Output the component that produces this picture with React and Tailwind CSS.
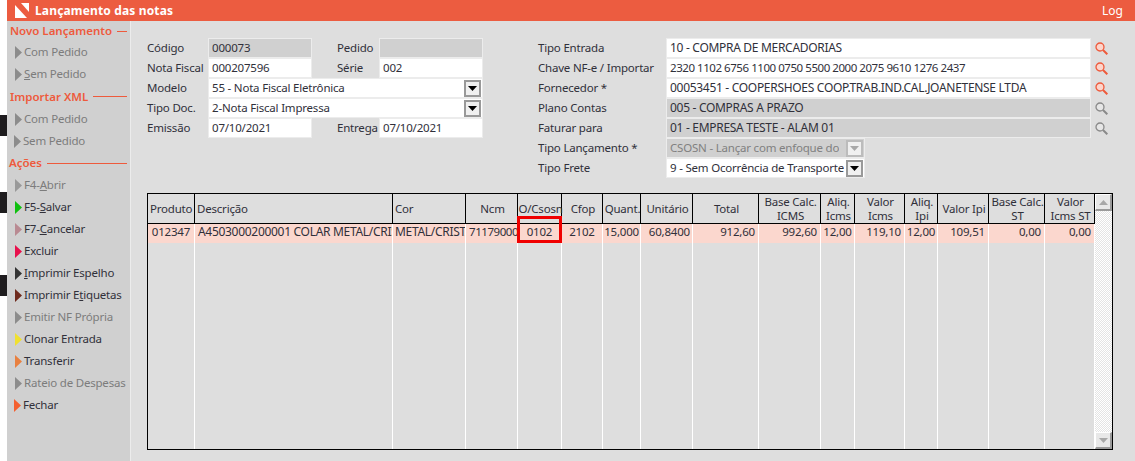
const font = "font-['Noto_Sans','Open_Sans',sans-serif]"

const menu = [
    { title: "Novo Lançamento", rowClass: "h-[20px] pl-[3px]" },
    { label: "Com Pedido", color: "#8c8c8c", muted: true },
    { label: <><u>S</u>em Pedido</>, color: "#8c8c8c", muted: true },
    { title: "Importar XML", rowClass: "h-[23px] pl-[3px]" },
    { label: "Com Pedido", color: "#8c8c8c", muted: true },
    { label: "Sem Pedido", color: "#8c8c8c", muted: true, shift: true },
    { title: "Ações", rowClass: "h-[22px] pl-[2px]" },
    { label: <>F4-<u>A</u>brir</>, color: "#999999", muted: true },
    { label: <>F5-<u>S</u>alvar</>, color: "#10c010" },
    { label: <>F7-<u>C</u>ancelar</>, color: "#b98a92" },
    { label: "Excluir", color: "#e8104c" },
    { label: <><u>I</u>mprimir Espelho</>, color: "#333333" },
    { label: <>Imprimir E<u>t</u>iquetas</>, color: "#6e2a1c" },
    { label: "Emitir NF Própria", color: "#8c8c8c", muted: true },
    { label: "Clonar Entrada", color: "#f0e030" },
    { label: "Transferir", color: "#e88040" },
    { label: "Rateio de Despesas", color: "#8c8c8c", muted: true },
    { label: "Fechar", color: "#f46030", shift: true },
]

const columns = [
    { name: "Produto", w: "w-[47px]", value: "012347", cell: "text-center" },
    { name: "Descrição", w: "w-[198px]", value: "A4503000200001 COLAR METAL/CRISTAL", cell: "pl-[3px] text-[12px] tracking-[-0.3px]" },
    { name: "Cor", w: "w-[73px]", value: "METAL/CRISTAL", cell: "pl-[2px] text-[12px] tracking-[-0.3px]" },
    { name: "Ncm", w: "w-[52px]", value: "71179000", cell: "pl-[3px] tracking-[-0.45px]", center: true },
    { name: "O/Csosn", w: "w-[44px]", value: "0102", cell: "text-center", center: true },
    { name: "Cfop", w: "w-[41px]", value: "2102", cell: "text-center", center: true },
    { name: "Quant.", w: "w-[38px]", value: "15,000", cell: "text-right pr-[1px]", center: true },
    { name: "Unitário", w: "w-[52px]", value: "60,8400", cell: "text-right pr-[2px]", center: true },
    { name: "Total", w: "w-[66px]", value: "912,60", cell: "text-right pr-[3px]", center: true },
    { name: <>Base Calc.<br />ICMS</>, w: "w-[62px]", value: "992,60", cell: "text-right pr-[3px]", center: true },
    { name: <>Aliq.<br />Icms</>, w: "w-[34px]", value: "12,00", cell: "text-center", center: true },
    { name: <>Valor<br />Icms</>, w: "w-[50px]", value: "119,10", cell: "text-right pr-[3px]", center: true },
    { name: <>Aliq.<br />Ipi</>, w: "w-[33px]", value: "12,00", cell: "text-center", center: true },
    { name: "Valor Ipi", w: "w-[51px]", value: "109,51", cell: "text-right pr-[3px]", center: true },
    { name: <>Base Calc.<br />ST</>, w: "w-[56px]", value: "0,00", cell: "text-right pr-[3px]", center: true },
    { name: <>Valor<br />Icms ST</>, w: "w-[50px]", value: "0,00", cell: "text-right pr-[3px]", center: true },
]

function Triangle({ color }) {
    return (
        <svg width="7" height="13" viewBox="0 0 7 13" className="shrink-0">
            <polygon points="0,0 7,6.5 0,13" fill={color} />
        </svg>
    )
}

function SearchIcon({ color, fill }) {
    return (
        <svg width="13" height="13" viewBox="0 0 13 13" fill="none" className="block">
            <circle cx="5" cy="5" r="4" fill={fill} stroke={color} strokeWidth="1.3" />
            <line x1="8" y1="8" x2="12.3" y2="12.3" stroke={color} strokeWidth="2" />
        </svg>
    )
}

function SelectButton({ disabled }) {
    return (
        <div className={`flex h-[17px] w-[17px] shrink-0 items-center justify-center border-2 bg-[#f0f0f0] ${disabled ? "border-[#bcbcbc]" : "border-[#999999]"}`}>
            <svg width="9" height="5" viewBox="0 0 9 5">
                <polygon points="0,0 9,0 4.5,5" fill={disabled ? "#a8a8a8" : "#000000"} />
            </svg>
        </div>
    )
}

function Field({ className, gray, muted, children }) {
    return (
        <div className={`flex h-[20px] items-center overflow-hidden whitespace-nowrap border border-[#ececec] pl-[3px] ${gray ? "bg-[#d0d0d0]" : "bg-white"} ${muted ? "text-[#808080]" : ""} ${className}`}>
            {children}
        </div>
    )
}

function SelectField({ className, gray, muted, disabled, children }) {
    return (
        <Field className={`justify-between pr-[1px] ${className}`} gray={gray} muted={muted}>
            <span className="overflow-hidden">{children}</span>
            <SelectButton disabled={disabled} />
        </Field>
    )
}

function LeftForm() {
    return (
        <div className="flex w-[336px] flex-col">
            <div className="flex items-center">
                <span className="w-[61px]">Código</span>
                <Field className="w-[104px]" gray>000073</Field>
                <span className="w-[67px] pl-[25px]">Pedido</span>
                <Field className="w-[104px]" gray />
            </div>
            <div className="flex items-center">
                <span className="w-[61px]">Nota Fiscal</span>
                <Field className="w-[104px]">000207596</Field>
                <span className="w-[67px] pl-[25px]">Série</span>
                <Field className="w-[104px]">002</Field>
            </div>
            <div className="flex items-center">
                <span className="w-[61px]">Modelo</span>
                <SelectField className="w-[275px]">55 - Nota Fiscal Eletrônica</SelectField>
            </div>
            <div className="flex items-center">
                <span className="w-[61px]">Tipo Doc.</span>
                <SelectField className="w-[275px]">2-Nota Fiscal Impressa</SelectField>
            </div>
            <div className="flex items-center">
                <span className="w-[61px]">Emissão</span>
                <Field className="w-[104px]">07/10/2021</Field>
                <span className="w-[67px] pl-[25px]">Entrega</span>
                <Field className="w-[104px]">07/10/2021</Field>
            </div>
        </div>
    )
}

function RightRow({ label, value, active, gray, valueClass }) {
    return (
        <div className="flex items-center">
            <span className="w-[128px]">{label}</span>
            <Field className="w-[425px]" gray={gray}>
                <span className={valueClass}>{value}</span>
            </Field>
            <span className="ml-[4px]">
                <SearchIcon color={active ? "#ee5a3c" : "#8a8a8a"} fill={active ? "#fdd5cb" : "#e6e6e6"} />
            </span>
        </div>
    )
}

function RightForm() {
    const caps = "text-[12px] tracking-[-0.3px]"
    return (
        <div className="flex w-[570px] flex-col">
            <RightRow label="Tipo Entrada" value="10 - COMPRA DE MERCADORIAS" valueClass={caps} active />
            <RightRow label="Chave NF-e / Importar" value="2320 1102 6756 1100 0750 5500 2000 2075 9610 1276 2437" valueClass="tracking-[-0.45px]" active />
            <RightRow label="Fornecedor *" value="00053451 - COOPERSHOES COOP.TRAB.IND.CAL.JOANETENSE LTDA" valueClass={caps} active />
            <RightRow label="Plano Contas" value="005 - COMPRAS A PRAZO" valueClass={caps} gray />
            <RightRow label="Faturar para" value="01 - EMPRESA TESTE - ALAM 01" valueClass={caps} gray />
            <div className="flex items-center">
                <span className="w-[128px]">Tipo Lançamento *</span>
                <SelectField className="w-[199px]" gray muted disabled>CSOSN - Lançar com enfoque do</SelectField>
            </div>
            <div className="flex items-center">
                <span className="w-[128px]">Tipo Frete</span>
                <SelectField className="w-[199px]">9 - Sem Ocorrência de Transporte</SelectField>
            </div>
        </div>
    )
}

function ScrollButton({ down }) {
    return (
        <div className="flex h-[17px] w-[17px] items-center justify-center border-b-2 border-r-2 border-t border-l border-b-[#9a9a9a] border-r-[#9a9a9a] border-t-white border-l-white bg-[#e8e8e8]">
            <svg width="9" height="5" viewBox="0 0 9 5">
                <polygon points={down ? "0,0 9,0 4.5,5" : "0,5 9,5 4.5,0"} fill="#a8a8a8" />
            </svg>
        </div>
    )
}

function Grid() {
    return (
        <div className="mt-[15px] flex h-[257px] w-[966px] border border-black">
            <div className="relative flex flex-col">
                <div className="flex h-[30px] shrink-0 border-b border-black">
                    {columns.map((col, i) => (
                        <div
                            key={i}
                            className={`flex shrink-0 items-center whitespace-nowrap border-r border-black pl-[2px] leading-[14px] ${col.w} ${col.center ? "justify-center pl-0 text-center" : ""}`}
                        >
                            <span>{col.name}</span>
                        </div>
                    ))}
                </div>
                <div className="flex flex-1">
                    {columns.map((col, i) => (
                        <div key={i} className={`shrink-0 border-r border-white ${col.w}`}>
                            <div className={`h-[19px] overflow-hidden whitespace-nowrap bg-[#fbd7ce] leading-[15px] ${col.cell}`}>
                                {col.value}
                            </div>
                        </div>
                    ))}
                </div>
                {/* marcacao vermelha por cima da coluna */}
                <div className="absolute left-[369px] top-[22px] h-[27px] w-[45px] border-[3px] border-[#f00000]" />
            </div>
            <div className="flex w-[17px] flex-col justify-between bg-[repeating-conic-gradient(#ffffff_0_25%,#e4e4e4_0_50%)] bg-[length:2px_2px]">
                <ScrollButton />
                <ScrollButton down />
            </div>
        </div>
    )
}

function Sidebar() {
    return (
        <div className="flex w-[124px] shrink-0 flex-col border-r border-[#ececec] bg-[#d0d0d0]">
            {menu.map((item, i) =>
                item.title ? (
                    <div key={i} className={`flex items-center gap-[5px] pr-[3px] text-[11.5px] font-semibold tracking-normal text-[#ee5a3c] ${item.rowClass}`}>
                        <span className="whitespace-nowrap">{item.title}</span>
                        <span className="h-[1px] flex-1 bg-[#ee5a3c]" />
                    </div>
                ) : (
                    <div key={i} className={`flex h-[22px] shrink-0 items-center gap-[2px] ${item.shift ? "pl-[7px]" : "pl-[8px]"} ${item.muted ? "text-[#7c7c7c]" : ""}`}>
                        <Triangle color={item.color} />
                        <span className="whitespace-nowrap">{item.label}</span>
                    </div>
                )
            )}
        </div>
    )
}

export default function App() {
    return (
        <div className={`flex h-[461px] w-[1135px] overflow-hidden bg-white text-[11.5px] leading-[16px] tracking-[-0.2px] text-[#30303a] ${font}`}>
            <div className="flex w-[7px] shrink-0 flex-col pt-[115px]">
                <div className="h-[21px] bg-[#1e1c1e]" />
                <div className="mt-[56px] h-[21px] bg-[#1e1c1e]" />
                <div className="mt-[62px] h-[21px] bg-[#1e1c1e]" />
            </div>
            <div className="flex flex-1 flex-col">
                <div className="flex h-[21px] shrink-0 items-center justify-between bg-[#ec5c40] pl-[8px] pr-[12px] text-white">
                    <div className="flex items-center gap-[6px]">
                        <svg width="14" height="15" viewBox="0 0 14 15">
                            <rect width="14" height="15" fill="#ffffff" />
                            <polygon points="0,0 6,0 14,9 14,15 12,15 0,2" fill="#ec5c40" />
                        </svg>
                        <span className="text-[12px] font-bold tracking-[0.15px]">Lançamento das notas</span>
                    </div>
                    <span className="text-[12px] tracking-normal">Log</span>
                </div>
                <div className="flex flex-1">
                    <Sidebar />
                    <div className="flex-1 bg-[#dedede] pl-[16px] pt-[17px]">
                        <div className="flex gap-[55px]">
                            <LeftForm />
                            <RightForm />
                        </div>
                        <Grid />
                    </div>
                </div>
            </div>
        </div>
    )
}
